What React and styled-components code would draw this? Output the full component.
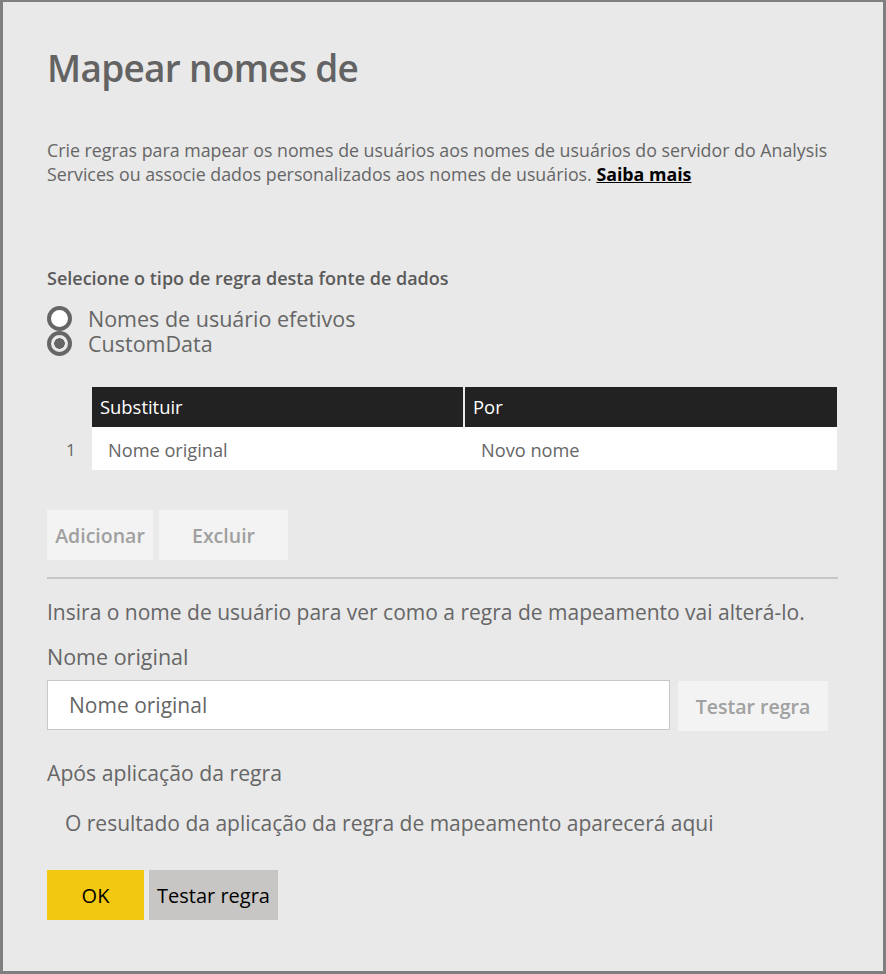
import React from 'react';
import styled, { createGlobalStyle } from 'styled-components';

const GlobalStyle = createGlobalStyle`
  html, body {
    margin: 0;
    padding: 0;
    background: #e9e9e9;
  }
  body {
    font-family: "Open Sans", "Noto Sans", "Liberation Sans", sans-serif;
  }
  * {
    box-sizing: border-box;
  }
`;

const rules = [{ id: 1, from: 'Nome original', to: 'Novo nome' }];

export default function App() {
  return (
    <>
      <GlobalStyle />
      <Dialog>
        <Title>Mapear nomes de</Title>
        <Description>
          Crie regras para mapear os nomes de usuários aos nomes de usuários do servidor do Analysis
          Services ou associe dados personalizados aos nomes de usuários. <HelpLink href="#">Saiba mais</HelpLink>
        </Description>

        <SectionHeading>Selecione o tipo de regra desta fonte de dados</SectionHeading>
        <RadioGroup>
          <RadioRow>
            <Radio />
            <RadioLabel>Nomes de usuário efetivos</RadioLabel>
          </RadioRow>
          <RadioRow>
            <Radio checked />
            <RadioLabel>CustomData</RadioLabel>
          </RadioRow>
        </RadioGroup>

        <RuleTable>
          <Corner />
          <HeadCell>Substituir</HeadCell>
          <HeadCell>Por</HeadCell>
          {rules.map((r) => (
            <React.Fragment key={r.id}>
              <RowNumber>{r.id}</RowNumber>
              <BodyCell>{r.from}</BodyCell>
              <BodyCell>{r.to}</BodyCell>
            </React.Fragment>
          ))}
        </RuleTable>

        <ButtonRow>
          <GhostButton width={106}>Adicionar</GhostButton>
          <GhostButton width={129}>Excluir</GhostButton>
        </ButtonRow>

        <Divider />

        <Paragraph>Insira o nome de usuário para ver como a regra de mapeamento vai alterá-lo.</Paragraph>
        <FieldLabel>Nome original</FieldLabel>
        <InputRow>
          <TextInput placeholder="Nome original" />
          <GhostButton width={150}>Testar regra</GhostButton>
        </InputRow>

        <ResultLabel>Após aplicação da regra</ResultLabel>
        <ResultText>O resultado da aplicação da regra de mapeamento aparecerá aqui</ResultText>

        <Footer>
          <PrimaryButton>OK</PrimaryButton>
          <SecondaryButton>Testar regra</SecondaryButton>
        </Footer>
      </Dialog>
    </>
  );
}

const Dialog = styled.div`
  width: 886px;
  height: 974px;
  background: #e9e9e9;
  border: 3px solid #7f7f7f;
  border-top-width: 2px;
  padding: 0 44px;
  color: #666666;
  overflow: hidden;
`;

const Title = styled.h1`
  margin: 42px 0 0;
  font-size: 37px;
  line-height: 48px;
  font-weight: 600;
  color: #636363;
  letter-spacing: -0.7px;
`;

const Description = styled.p`
  margin: 46px 0 0;
  font-size: 17.8px;
  line-height: 24px;
  width: 795px;
`;

const HelpLink = styled.a`
  color: #000;
  font-weight: 700;
  text-decoration: underline;
`;

const SectionHeading = styled.div`
  margin-top: 81px;
  font-size: 18px;
  line-height: 22px;
  font-weight: 600;
  color: #5a5a5a;
`;

const RadioGroup = styled.div`
  margin-top: 17px;
  display: flex;
  flex-direction: column;
`;

const RadioRow = styled.label`
  display: flex;
  align-items: center;
  height: 25px;
`;

const Radio = styled.span`
  width: 25px;
  height: 25px;
  border-radius: 50%;
  border: 4px solid #666;
  background: ${(p) => (p.checked ? 'radial-gradient(circle, #666 0 5px, #e9e9e9 5.5px)' : '#fff')};
  flex-shrink: 0;
`;

const RadioLabel = styled.span`
  margin-left: 16px;
  font-size: 21.5px;
  line-height: 25px;
  color: #666;
`;

const RuleTable = styled.div`
  margin-top: 31px;
  display: grid;
  grid-template-columns: 45px 371px 374px;
`;

const Corner = styled.div``;

const HeadCell = styled.div`
  height: 40px;
  background: #222222;
  color: #fff;
  font-size: 18.4px;
  line-height: 40px;
  padding-left: 8px;
  & + & {
    border-left: 2px solid #e9e9e9;
  }
`;

const RowNumber = styled.div`
  height: 43px;
  line-height: 46px;
  font-size: 17px;
  padding-left: 19px;
  color: #666;
`;

const BodyCell = styled.div`
  height: 43px;
  background: #fff;
  font-size: 18.2px;
  line-height: 46px;
  padding-left: 16px;
  color: #666;
  & + & {
    padding-left: 18px;
  }
`;

const ButtonRow = styled.div`
  margin-top: 40px;
  display: flex;
  gap: 6px;
`;

const GhostButton = styled.button`
  width: ${(p) => p.width}px;
  height: 50px;
  border: none;
  background: #f3f3f3;
  color: #a0a0a0;
  font-family: inherit;
  font-size: 19.5px;
  font-weight: 600;
  padding: 0;
  flex-shrink: 0;
`;

const Divider = styled.hr`
  margin: 17px 0 0;
  width: 791px;
  height: 2px;
  border: none;
  background: #c6c6c6;
`;

const Paragraph = styled.div`
  margin-top: 20px;
  font-size: 21px;
  line-height: 26px;
`;

const FieldLabel = styled.div`
  margin-top: 19px;
  font-size: 21.5px;
  line-height: 26px;
`;

const InputRow = styled.div`
  margin-top: 10px;
  display: flex;
  align-items: flex-start;
  gap: 8px;
  & > button {
    margin-top: 1px;
  }
`;

const TextInput = styled.input`
  width: 623px;
  height: 50px;
  border: 1px solid #c8c8c8;
  background: #fff;
  padding: 0 21px;
  font-family: inherit;
  font-size: 21px;
  color: #666;
  outline: none;
  &::placeholder {
    color: #666;
  }
`;

const ResultLabel = styled.div`
  margin-top: 29px;
  font-size: 21.2px;
  line-height: 26px;
`;

const ResultText = styled.div`
  margin-top: 24px;
  padding-left: 18px;
  font-size: 21px;
  line-height: 26px;
`;

const Footer = styled.div`
  margin-top: 34px;
  display: flex;
  gap: 5px;
`;

const PrimaryButton = styled.button`
  width: 97px;
  height: 50px;
  border: none;
  background: #f2c811;
  color: #000;
  font-family: inherit;
  font-size: 20px;
  padding: 0;
`;

const SecondaryButton = styled(PrimaryButton)`
  width: 129px;
  background: #c8c6c4;
`;
